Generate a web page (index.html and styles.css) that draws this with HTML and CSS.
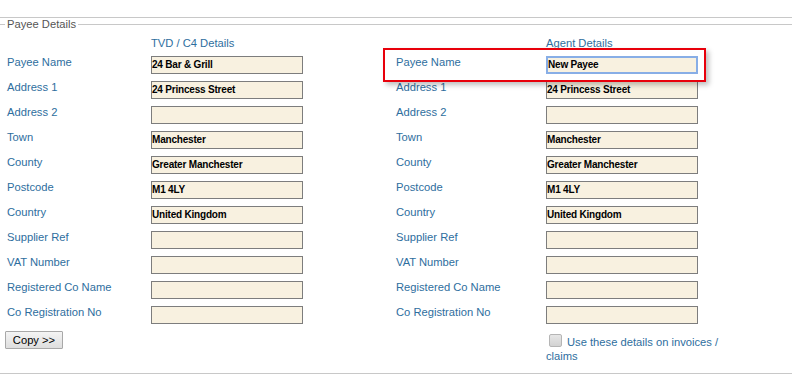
FILE: index.html
```html
<!DOCTYPE html>
<html lang="en">
<head>
    <meta charset="UTF-8">
    <title>Payee Details</title>
    <link rel="stylesheet" href="styles.css">
</head>
<body>
    <div class="top-rule"></div>
    <fieldset class="payee">
        <legend>Payee Details</legend>
        <div class="grid">
            <div></div>
            <div class="col-head">TVD / C4 Details</div>
            <div></div>
            <div></div>
            <div class="col-head">Agent Details</div>

            <label>Payee Name</label>
            <input type="text" value="24 Bar &amp; Grill">
            <div></div>
            <div class="highlight">
                <label>Payee Name</label>
                <input type="text" class="focused" value="New Payee">
            </div>

            <label>Address 1</label>
            <input type="text" value="24 Princess Street">
            <div></div>
            <label>Address 1</label>
            <input type="text" value="24 Princess Street">

            <label>Address 2</label>
            <input type="text" value="">
            <div></div>
            <label>Address 2</label>
            <input type="text" value="">

            <label>Town</label>
            <input type="text" value="Manchester">
            <div></div>
            <label>Town</label>
            <input type="text" value="Manchester">

            <label>County</label>
            <input type="text" value="Greater Manchester">
            <div></div>
            <label>County</label>
            <input type="text" value="Greater Manchester">

            <label>Postcode</label>
            <input type="text" value="M1 4LY">
            <div></div>
            <label>Postcode</label>
            <input type="text" value="M1 4LY">

            <label>Country</label>
            <input type="text" value="United Kingdom">
            <div></div>
            <label>Country</label>
            <input type="text" value="United Kingdom">

            <label>Supplier Ref</label>
            <input type="text" value="">
            <div></div>
            <label>Supplier Ref</label>
            <input type="text" value="">

            <label>VAT Number</label>
            <input type="text" value="">
            <div></div>
            <label>VAT Number</label>
            <input type="text" value="">

            <label>Registered Co Name</label>
            <input type="text" value="">
            <div></div>
            <label>Registered Co Name</label>
            <input type="text" value="">

            <label>Co Registration No</label>
            <input type="text" value="">
            <div></div>
            <label>Co Registration No</label>
            <input type="text" value="">
        </div>

        <div class="actions">
            <button type="button" class="copy">Copy &gt;&gt;</button>
            <label class="use-details">
                <span class="check"></span>Use these details on invoices / claims
            </label>
        </div>
    </fieldset>
</body>
</html>
```

FILE: styles.css
```css
body {
    margin: 0;
    font-family: Arial, "Liberation Sans", sans-serif;
    font-size: 11.2px;
    background: #fff;
}
.top-rule {
    height: 17px;
    border-bottom: 1px solid #c8c8c8;
}
.payee {
    margin: 0;
    padding: 0 0 10px 7px;
    border: none;
    border-top: 1px solid #c8c8c8;
    border-bottom: 1px solid #c8c8c8;
}
.payee legend {
    padding: 0 2px;
    margin-left: -2px;
    color: #555;
    font-size: 11.2px;
    line-height: 13px;
}
.grid {
    display: grid;
    grid-template-columns: 144px 152px 93px 150px 152px;
    grid-template-rows: 21px;
    grid-auto-rows: 25px;
    align-items: center;
}
.col-head {
    align-self: start;
    padding-top: 5px;
    color: #2e6e9e;
    line-height: 14px;
}
.grid label {
    color: #2e6e9e;
    line-height: 14px;
    margin-top: -6px;
}
.grid input {
    box-sizing: border-box;
    width: 152px;
    height: 18px;
    margin: 0;
    padding: 0;
    border: 1px solid #7d7d7d;
    background: #f8f1e0;
    font-family: Arial, "Liberation Sans", sans-serif;
    font-size: 10px;
    font-weight: bold;
    letter-spacing: -0.2px;
    color: #000;
}
.grid input.focused {
    border: 2px solid #88aee6;
    padding: 0;
    outline: none;
}
.highlight {
    grid-column: 4 / span 2;
    display: grid;
    grid-template-columns: 150px 152px;
    align-items: center;
    position: relative;
    height: 25px;
}
.highlight::after {
    content: "";
    position: absolute;
    left: -13px;
    right: -8px;
    top: -4px;
    bottom: -5px;
    border: 2px solid #e8000b;
    box-shadow: 3px 3px 5px rgba(0, 0, 0, 0.25);
}
.actions {
    display: flex;
    align-items: flex-start;
    margin-top: 4px;
}
.copy {
    flex: none;
    width: 58px;
    height: 18px;
    margin-left: -2px;
    padding: 0;
    border: 1px solid #a8a8a8;
    border-radius: 1px;
    background: linear-gradient(#f4f4f4, #dedede);
    font-family: Arial, "Liberation Sans", sans-serif;
    font-size: 11.2px;
    line-height: 16px;
    color: #000;
}
.use-details {
    flex: none;
    width: 176px;
    margin-left: 483px;
    margin-top: 3px;
    color: #2e6e9e;
    line-height: 14px;
}
.check {
    display: inline-block;
    width: 11px;
    height: 11px;
    margin: 0 5px 0 3px;
    vertical-align: -1px;
    border: 1px solid #b5b5b5;
    border-radius: 2px;
    background: linear-gradient(#e6e6e6, #d2d2d2);
}
```
